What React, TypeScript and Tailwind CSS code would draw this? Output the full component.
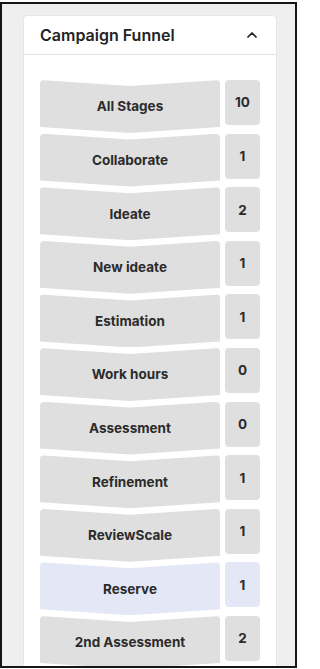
import { ChevronUp } from 'lucide-react';

const stages = [
  { name: 'All Stages', count: 10 },
  { name: 'Collaborate', count: 1 },
  { name: 'Ideate', count: 2 },
  { name: 'New ideate', count: 1 },
  { name: 'Estimation', count: 1 },
  { name: 'Work hours', count: 0 },
  { name: 'Assessment', count: 0 },
  { name: 'Refinement', count: 1 },
  { name: 'ReviewScale', count: 1 },
  { name: 'Reserve', count: 1, active: true },
  { name: '2nd Assessment', count: 2 },
];

export default function App() {
  return (
    <div className="w-[298px] h-[669px] bg-white pt-[2px] overflow-hidden font-['Inter',sans-serif]">
      <div className="w-[297px] h-[666px] border-2 border-[#161616] bg-[#efefef] overflow-hidden">
        <div className="ml-[21px] mt-[11px] w-[254px] bg-white border border-[#e6e6e6] rounded-[4px]">
          <div className="flex items-center justify-between h-[39px] pl-[16px] pr-[16px] border-b border-[#e3e3e3]">
            <h2 className="text-[16px] font-semibold text-[#232323]">Campaign Funnel</h2>
            <ChevronUp className="w-[16px] h-[16px] text-[#1f1f1f]" strokeWidth={2.6} />
          </div>

          <div className="flex flex-col gap-[0.6px] pt-[25px] pl-[16px] pr-[15px] pb-4">
            {stages.map(({ name, count, active }) => (
              <div key={name} className="flex gap-[5px] h-[53px]">
                <div
                  className={`w-[180px] h-[53px] rounded-[4px] flex items-center justify-center [clip-path:polygon(0_0,50%_6px,100%_0,100%_calc(100%-6px),50%_100%,0_calc(100%-6px))] ${
                    active ? 'bg-[#e4e7f6]' : 'bg-[#dfdfdf]'
                  }`}
                >
                  <span className="text-[13.5px] font-bold text-[#2b2b2b]">{name}</span>
                </div>
                <div
                  className={`w-[35px] h-[45px] rounded-[4px] flex items-center justify-center ${
                    active ? 'bg-[#e4e7f6]' : 'bg-[#dfdfdf]'
                  }`}
                >
                  <span className="text-[13.5px] font-bold text-[#2b2b2b]">{count}</span>
                </div>
              </div>
            ))}
          </div>
        </div>
      </div>
    </div>
  );
}
